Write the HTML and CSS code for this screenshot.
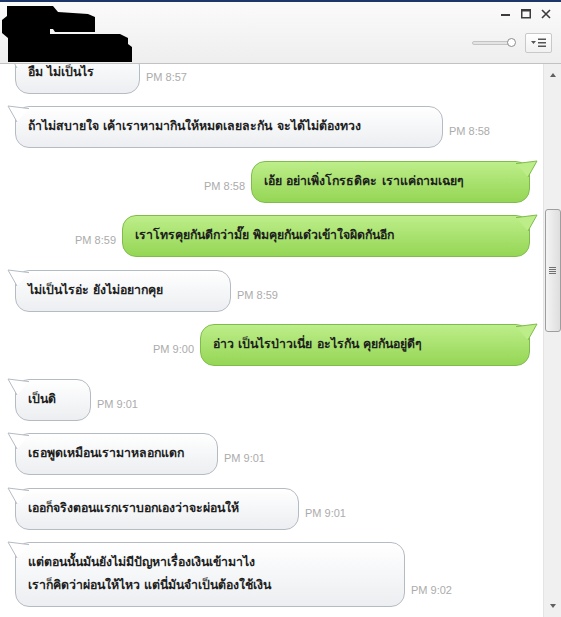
FILE: index.html
```html
<!DOCTYPE html>
<html lang="th">
<head>
<meta charset="utf-8">
<title>Chat</title>
<link rel="stylesheet" href="styles.css">
</head>
<body>
<div class="window">
  <header class="titlebar">
    <svg class="redact" width="140" height="64" viewBox="0 0 140 64"><polygon points="7,6 53,6 58,12 88,14 95,17 95,32 55,32 53,29 50,29 50,34 120,34 128,38 128,44 132,47 132,62 8,62 8,38 2,33 2,20 7,16" fill="#000"/></svg>
    <div class="win-controls">
      <svg class="ctl" width="10" height="10" viewBox="0 0 10 10"><rect x="0" y="5" width="9" height="2" fill="#3c3c3c"/></svg>
      <svg class="ctl" width="10" height="10" viewBox="0 0 10 10"><rect x="0.75" y="0.75" width="8.5" height="8" fill="none" stroke="#3c3c3c" stroke-width="1.5"/><rect x="0" y="0" width="10" height="2.5" fill="#3c3c3c"/></svg>
      <svg class="ctl" width="10" height="10" viewBox="0 0 10 10"><path d="M1 1 L9 9 M9 1 L1 9" stroke="#3c3c3c" stroke-width="1.6"/></svg>
    </div>
    <div class="tools">
      <div class="slider"><span class="track"></span><span class="knob"></span></div>
      <div class="menu-btn">
        <svg width="16" height="10" viewBox="0 0 16 10"><path d="M0 3 L5 3 L2.5 6 Z" fill="#555"/><rect x="7" y="0.5" width="8" height="1.5" fill="#555"/><rect x="7" y="4" width="8" height="1.5" fill="#555"/><rect x="7" y="7.5" width="8" height="1.5" fill="#555"/></svg>
      </div>
    </div>
  </header>
  <div class="main">
    <div class="chat">
      <div class="row in first"><div class="bubble w125">อืม ไม่เป็นไร<svg class="tail" width="24" height="20" viewBox="0 0 24 20"><polygon points="22,3.6 1,1 10,17" /><polyline points="22,3.6 1,1 10,17" /></svg></div><span class="time">PM 8:57</span></div>
      <div class="row in"><div class="bubble w428">ถ้าไม่สบายใจ เค้าเราหามากินให้หมดเลยละกัน จะได้ไม่ต้องทวง<svg class="tail" width="24" height="20" viewBox="0 0 24 20"><polygon points="22,3.6 1,1 10,17" /><polyline points="22,3.6 1,1 10,17" /></svg></div><span class="time">PM 8:58</span></div>
      <div class="row out"><span class="time">PM 8:58</span><div class="bubble w279">เอ้ย อย่าเพิ่งโกรธดิคะ เราแค่ถามเฉยๆ<svg class="tail" width="24" height="20" viewBox="0 0 24 20"><polygon points="22,3.6 1,1 10,17" /><polyline points="22,3.6 1,1 10,17" /></svg></div></div>
      <div class="row out"><span class="time">PM 8:59</span><div class="bubble w408">เราโทรคุยกันดีกว่ามั๊ย พิมคุยกันเด๋วเข้าใจผิดกันอีก<svg class="tail" width="24" height="20" viewBox="0 0 24 20"><polygon points="22,3.6 1,1 10,17" /><polyline points="22,3.6 1,1 10,17" /></svg></div></div>
      <div class="row in"><div class="bubble w216">ไม่เป็นไรอ่ะ ยังไม่อยากคุย<svg class="tail" width="24" height="20" viewBox="0 0 24 20"><polygon points="22,3.6 1,1 10,17" /><polyline points="22,3.6 1,1 10,17" /></svg></div><span class="time">PM 8:59</span></div>
      <div class="row out"><span class="time">PM 9:00</span><div class="bubble w330">อ่าว เป็นไรป่าวเนี่ย อะไรกัน คุยกันอยู่ดีๆ<svg class="tail" width="24" height="20" viewBox="0 0 24 20"><polygon points="22,3.6 1,1 10,17" /><polyline points="22,3.6 1,1 10,17" /></svg></div></div>
      <div class="row in"><div class="bubble w76">เป็นดิ<svg class="tail" width="24" height="20" viewBox="0 0 24 20"><polygon points="22,3.6 1,1 10,17" /><polyline points="22,3.6 1,1 10,17" /></svg></div><span class="time">PM 9:01</span></div>
      <div class="row in"><div class="bubble w203">เธอพูดเหมือนเรามาหลอกแดก<svg class="tail" width="24" height="20" viewBox="0 0 24 20"><polygon points="22,3.6 1,1 10,17" /><polyline points="22,3.6 1,1 10,17" /></svg></div><span class="time">PM 9:01</span></div>
      <div class="row in"><div class="bubble w284">เออก็จริงตอนแรกเราบอกเองว่าจะผ่อนให้<svg class="tail" width="24" height="20" viewBox="0 0 24 20"><polygon points="22,3.6 1,1 10,17" /><polyline points="22,3.6 1,1 10,17" /></svg></div><span class="time">PM 9:01</span></div>
      <div class="row in"><div class="bubble w390">แต่ตอนนั้นมันยังไม่มีปัญหาเรื่องเงินเข้ามาไง<br>เราก็คิดว่าผ่อนให้ไหว แต่นี่มันจำเป็นต้องใช้เงิน<svg class="tail" width="24" height="20" viewBox="0 0 24 20"><polygon points="22,3.6 1,1 10,17" /><polyline points="22,3.6 1,1 10,17" /></svg></div><span class="time">PM 9:02</span></div>
    </div>
    <div class="scrollbar">
      <div class="arrow up"></div>
      <div class="sb-track"><div class="thumb"><span class="grip"></span></div></div>
      <div class="arrow down"></div>
    </div>
  </div>
</div>
</body>
</html>
```
FILE: styles.css
```css
html, body {
  margin: 0;
  padding: 0;
}
body {
  width: 561px;
  height: 617px;
  overflow: hidden;
  background: #fff;
  font-family: Tahoma, "DejaVu Sans", "Noto Sans", sans-serif;
}
.window {
  width: 561px;
  height: 617px;
  display: flex;
  flex-direction: column;
}
.titlebar {
  position: relative;
  box-sizing: border-box;
  height: 64px;
  flex: none;
  border-top: 2px solid #1d3768;
  border-bottom: 1px solid #c2c2c2;
  background: linear-gradient(#fbfbfb, #eeeeee);
  display: flex;
  flex-direction: column;
  align-items: flex-end;
  padding: 7px 9px 0 0;
}
.redact {
  position: absolute;
  left: 0;
  top: -2px;
}
.win-controls {
  display: flex;
  gap: 10px;
  align-items: center;
  padding-right: 1px;
}
.ctl {
  display: block;
}
.tools {
  margin-top: 14px;
  display: flex;
  align-items: center;
  gap: 9px;
}
.slider {
  position: relative;
  width: 44px;
  height: 10px;
}
.track {
  position: absolute;
  left: 0;
  right: 6px;
  top: 3px;
  height: 2px;
  background: #e4e4e4;
  border: 1px solid #c4c4c4;
  border-radius: 2px;
}
.knob {
  position: absolute;
  right: 0;
  top: 0;
  box-sizing: border-box;
  width: 9px;
  height: 9px;
  border-radius: 50%;
  background: #fff;
  border: 1.5px solid #8d8d8d;
}
.menu-btn {
  box-sizing: border-box;
  width: 27px;
  height: 20px;
  border: 1px solid #c9c9c9;
  border-radius: 2px;
  background: linear-gradient(#ffffff, #f1f1f1);
  display: flex;
  align-items: center;
  justify-content: center;
}
.menu-btn svg {
  display: block;
}
.main {
  flex: 1;
  display: flex;
  min-height: 0;
}
.chat {
  flex: 1;
  overflow: hidden;
  display: flex;
  flex-direction: column;
  gap: 12.5px;
  padding: 0 13px 0 15px;
}
.row {
  display: flex;
  align-items: flex-end;
  gap: 6px;
  flex: none;
}
.row.first {
  margin-top: -12.5px;
}
.row.out {
  justify-content: flex-end;
}
.bubble {
  position: relative;
  box-sizing: border-box;
  border-radius: 14px;
  padding: 8px 10px 9px 12px;
  line-height: 23px;
  font-size: 12.3px;
  font-weight: bold;
  color: #1e1e1e;
  white-space: nowrap;
}
.row.in .bubble {
  background: linear-gradient(#ffffff, #eceef1);
  border: 1px solid #b5bbc3;
}
.row.out .bubble {
  background: linear-gradient(#bdee8a, #95d655);
  border: 1px solid #80bc4c;
}
.tail {
  position: absolute;
  top: -2px;
  left: -9px;
  overflow: visible;
}
.row.out .tail {
  left: auto;
  right: -9px;
  transform: scaleX(-1);
}
.tail polygon {
  stroke: none;
}
.tail polyline {
  fill: none;
  stroke-width: 1;
}
.row.in .tail polygon { fill: #ffffff; }
.row.in .tail polyline { stroke: #b5bbc3; }
.row.out .tail polygon { fill: #bced88; }
.row.out .tail polyline { stroke: #80bc4c; }
.time {
  font-family: "Liberation Sans", Arial, sans-serif;
  font-size: 11px;
  line-height: 13px;
  color: #ababab;
  margin-bottom: 10px;
  white-space: nowrap;
}
.w76 { width: 76px; }
.w125 { width: 125px; }
.w203 { width: 203px; }
.w216 { width: 216px; }
.w279 { width: 279px; }
.w284 { width: 284px; }
.w330 { width: 330px; }
.w390 { width: 390px; }
.w408 { width: 408px; }
.w428 { width: 428px; }
.scrollbar {
  width: 18px;
  flex: none;
  box-sizing: border-box;
  background: #f0f0f0;
  border-left: 1px solid #e4e4e4;
  display: flex;
  flex-direction: column;
  align-items: center;
}
.arrow {
  width: 0;
  height: 0;
  flex: none;
  border-left: 3.5px solid transparent;
  border-right: 3.5px solid transparent;
}
.arrow.up {
  margin-top: 9px;
  border-bottom: 4px solid #606060;
}
.arrow.down {
  margin-bottom: 9px;
  border-top: 4px solid #606060;
}
.sb-track {
  flex: 1;
  width: 100%;
  display: flex;
  justify-content: center;
}
.thumb {
  box-sizing: border-box;
  margin-top: 132px;
  width: 16px;
  height: 123px;
  border: 1px solid #9e9e9e;
  border-radius: 3px;
  background: linear-gradient(90deg, #f4f4f4, #dedede);
  display: flex;
  align-items: center;
  justify-content: center;
}
.grip {
  display: block;
  width: 7px;
  height: 8px;
  background: repeating-linear-gradient(#707070 0 1px, transparent 1px 2px);
}
```
